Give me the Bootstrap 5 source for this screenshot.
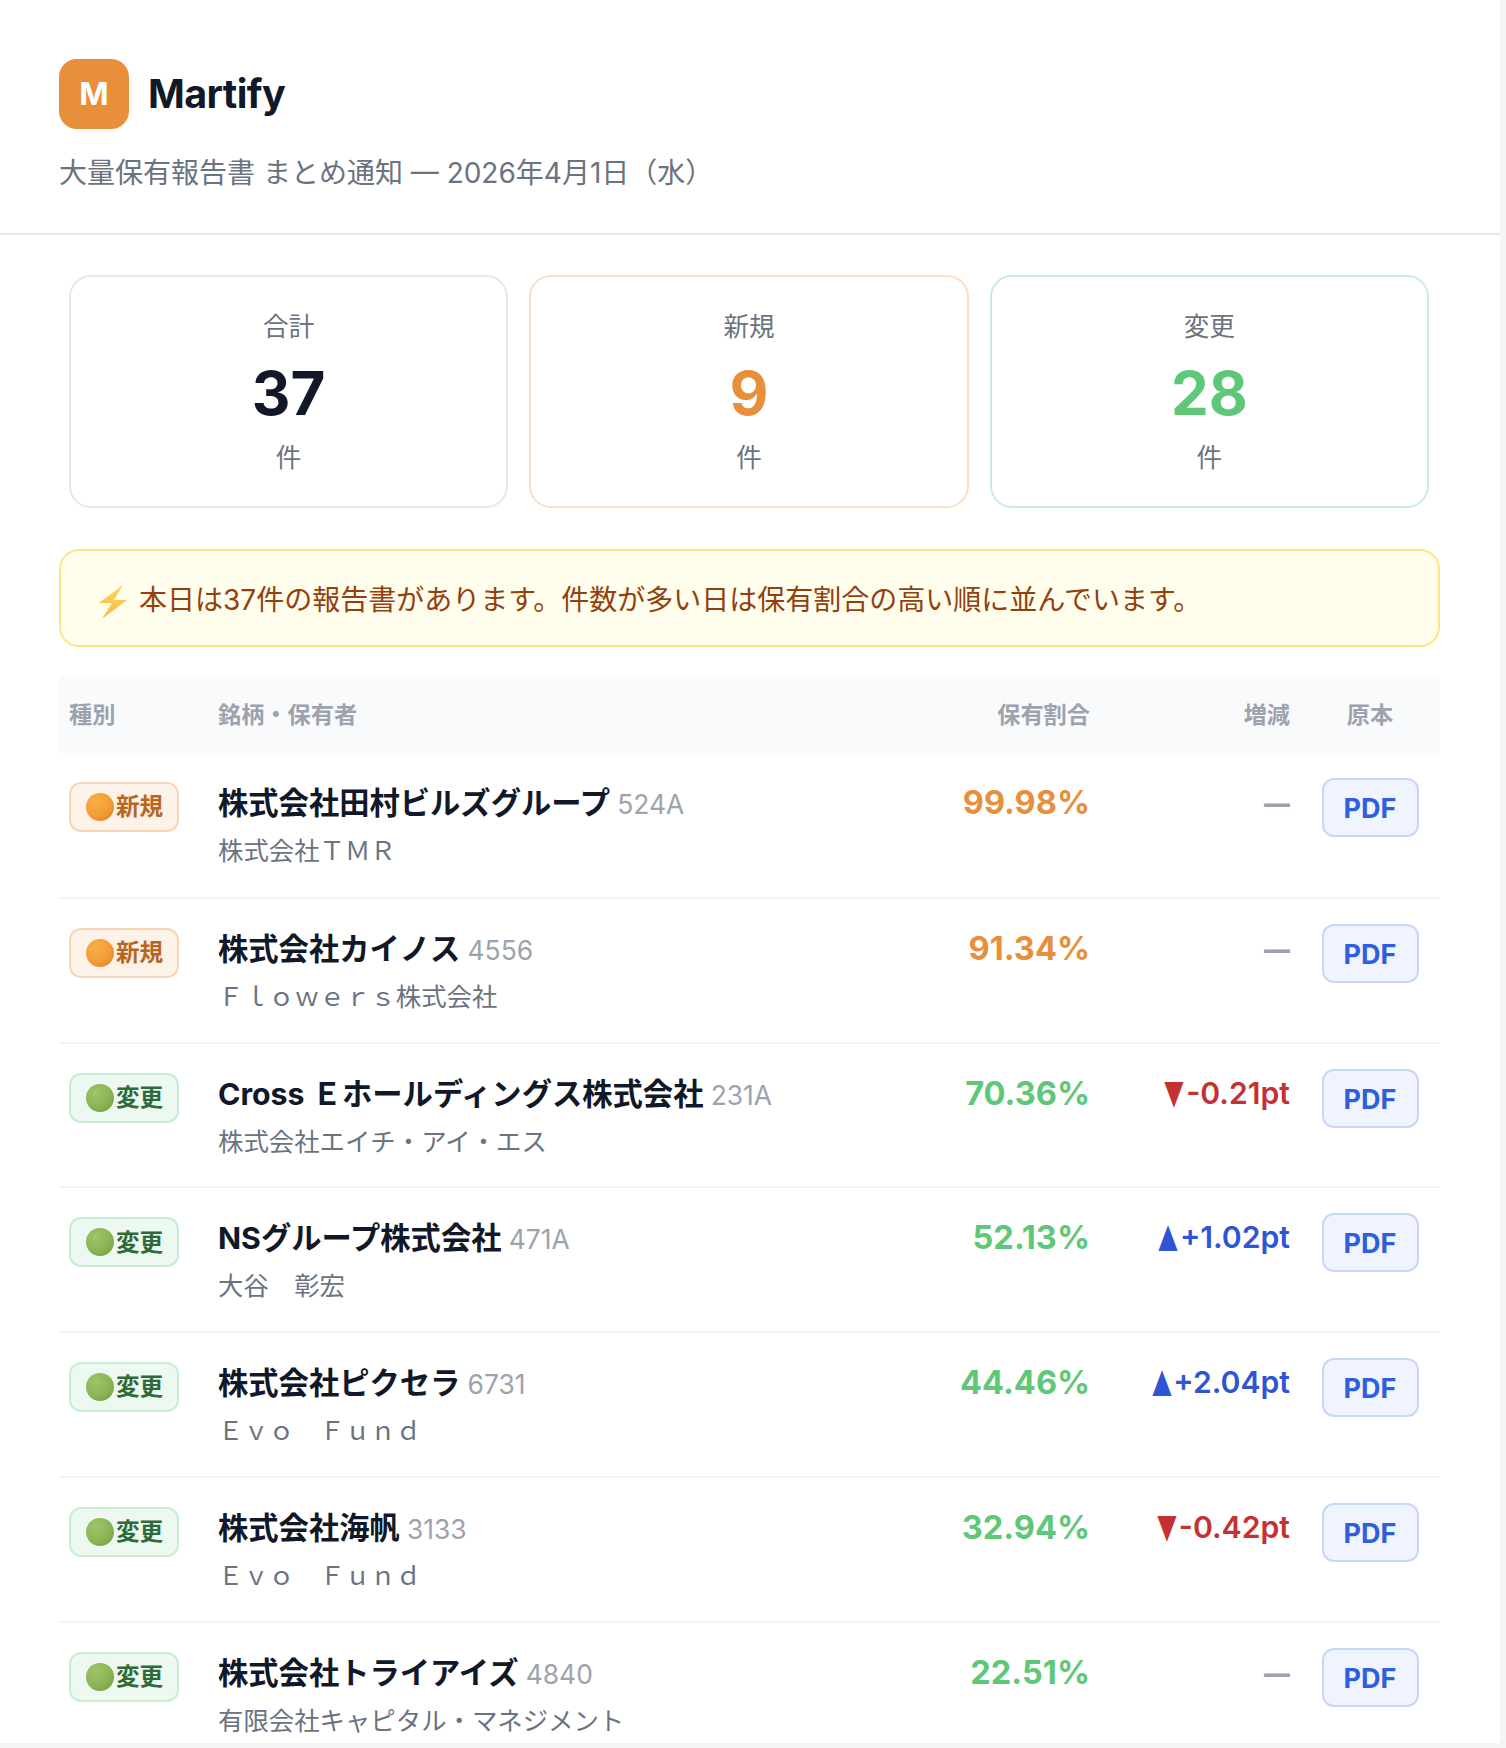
<!DOCTYPE html>
<html lang="ja">
<head>
<meta charset="utf-8">
<title>Martify</title>
<link href="https://cdn.jsdelivr.net/npm/bootstrap@5.3.0/dist/css/bootstrap.min.css" rel="stylesheet">
<style>
html,body{height:100%;overflow:hidden}
body{background:#f5f5f5;font-family:Inter,"Noto Sans CJK JP",sans-serif;color:#111827}
.sheet{width:1500px;height:1743px;background:#fff;overflow:hidden}
.mail-head{padding:59px 59px 0;height:235px;border-bottom:2px solid #e5e7eb}
.logo-box{width:70px;height:70px;border-radius:18px;background:#e88f3c;color:#fff;font-size:31.5px;font-weight:700;margin-right:19px}
.brand-name{font-size:39.5px;font-weight:700;line-height:70px;color:#111827;letter-spacing:-.6px}
.subtitle{font-size:28px;line-height:40px;color:#6b7280;margin-top:24px}
.mail-body{padding:40px 60px 0 59px}
.stat-row{gap:21px;padding:0 11px 0 10px;margin-bottom:41px}
.stat-box{flex:1 1 0;height:233px;border:2px solid #e5e7eb;border-radius:22px;text-align:center;padding-top:32px}
.stat-box.is-new{border-color:#fbdec5}
.stat-box.is-change{border-color:#c9eed4}
.stat-label{font-size:25.6px;line-height:36px;color:#6b7280}
.stat-num{font-size:60px;font-weight:700;line-height:80px;margin:8px 0 7px}
.c-orange{color:#e88f3c}
.c-green{color:#5fc878}
.notice{height:98px;border:2px solid #fde68a;background:#fffdeb;border-radius:20px;color:#92400e;font-size:28px;padding:4px 0 0 38px;margin-bottom:30px}
.notice svg{width:28px;height:34px;margin:4px 12px 0 0;flex:none}
.report-table{table-layout:fixed;width:1381px;margin:0;--bs-table-bg:transparent;color:#111827}
.report-table th{background:#f9fafb;height:76px;padding:0 10px;font-size:23.2px;font-weight:600;color:#9ca3af;vertical-align:middle;border:0}
.report-table td{height:144.8px;padding:25px 10px 0;vertical-align:top;border:0;border-bottom:2px solid #f3f4f6}
.report-table td.rate,.report-table td.delta{padding-top:27px}
.w-kind{width:149px}
.w-rate{width:150px}
.w-delta{width:200px}
.w-pdf{width:140px}
.kind-tag{width:110px;height:50px;border:2px solid;border-radius:12px;font-size:23.6px;font-weight:700;margin-top:4px;padding-left:15px}
.kind-tag svg{width:28px;height:28px;flex:none;margin-right:2px}
.kind-new{background:#fdf2e8;border-color:#f9d6b8;color:#b8651f}
.kind-change{background:#edf8f0;border-color:#c6eed2;color:#2f6b3a}
.co-name{font-size:30.3px;font-weight:700;line-height:44px;color:#111827;margin-top:3px}
.co-code{font-size:26.4px;font-weight:400;color:#9ca3af}
.holder{font-size:25.4px;line-height:40px;color:#6b7280;margin-top:5px}
.rate{font-size:32.6px;font-weight:700;line-height:44px}
.delta{font-size:30.2px;font-weight:600;line-height:44px}
.tri{display:inline-block;font-size:23px;transform:scale(.9,1.45);transform-origin:50% 55%}
.dash-val{color:#9ca3af;font-size:26px;font-weight:800}
.d-down{color:#c53030}
.d-up{color:#2f55d4}
.pdf-link{display:block;width:97px;height:59px;line-height:57px;margin:0 auto;border:2px solid #c7d7f8;background:#eff4ff;border-radius:12px;color:#2f5fdc;font-size:27px;font-weight:700;text-decoration:none;text-align:center}
</style>
</head>
<body>
<div class="sheet">
  <header class="mail-head">
    <div class="d-flex align-items-center">
      <div class="logo-box d-flex align-items-center justify-content-center">M</div>
      <div class="brand-name">Martify</div>
    </div>
    <div class="subtitle">大量保有報告書 まとめ通知 — 2026年4月1日（水）</div>
  </header>
  <main class="mail-body">
    <div class="d-flex stat-row">
      <div class="stat-box"><div class="stat-label">合計</div><div class="stat-num">37</div><div class="stat-label">件</div></div>
      <div class="stat-box is-new"><div class="stat-label">新規</div><div class="stat-num c-orange">9</div><div class="stat-label">件</div></div>
      <div class="stat-box is-change"><div class="stat-label">変更</div><div class="stat-num c-green">28</div><div class="stat-label">件</div></div>
    </div>
    <div class="notice d-flex align-items-center">
      <svg viewBox="0 0 28 34" aria-hidden="true"><defs><linearGradient id="bolt" x1="0" y1="0" x2="0" y2="1"><stop offset="0" stop-color="#fbd55e"/><stop offset="1" stop-color="#f7bb42"/></linearGradient></defs><path d="M24 0 0 18h13L3 34 28 15H15Z" fill="url(#bolt)"/></svg>
      <span>本日は37件の報告書があります。件数が多い日は保有割合の高い順に並んでいます。</span>
    </div>
    <svg width="0" height="0" class="position-absolute" aria-hidden="true">
      <defs>
        <radialGradient id="go" cx=".35" cy=".3" r=".8"><stop offset="0" stop-color="#f9b04a"/><stop offset=".7" stop-color="#f29a33"/><stop offset="1" stop-color="#e0832a"/></radialGradient>
        <radialGradient id="gg" cx=".35" cy=".3" r=".8"><stop offset="0" stop-color="#9fc46a"/><stop offset=".7" stop-color="#8ab253"/><stop offset="1" stop-color="#74a044"/></radialGradient>
        <symbol id="dot-o" viewBox="0 0 28 28"><circle cx="14" cy="14" r="14" fill="url(#go)"/></symbol>
        <symbol id="dot-g" viewBox="0 0 28 28"><circle cx="14" cy="14" r="14" fill="url(#gg)"/></symbol>
      </defs>
    </svg>
    <table class="table report-table">
      <thead><tr>
        <th class="w-kind">種別</th>
        <th>銘柄・保有者</th>
        <th class="w-rate text-end">保有割合</th>
        <th class="w-delta text-end">増減</th>
        <th class="w-pdf text-center">原本</th>
      </tr></thead>
      <tbody>
        <tr>
          <td><div class="kind-tag kind-new d-flex align-items-center"><svg><use href="#dot-o"/></svg>新規</div></td>
          <td><div class="co-name">株式会社田村ビルズグループ <span class="co-code">524A</span></div><div class="holder">株式会社ＴＭＲ</div></td>
          <td class="text-end rate c-orange">99.98%</td>
          <td class="text-end delta"><span class="dash-val">—</span></td>
          <td><a class="pdf-link" href="#">PDF</a></td>
        </tr>
        <tr>
          <td><div class="kind-tag kind-new d-flex align-items-center"><svg><use href="#dot-o"/></svg>新規</div></td>
          <td><div class="co-name">株式会社カイノス <span class="co-code">4556</span></div><div class="holder">Ｆｌｏｗｅｒｓ株式会社</div></td>
          <td class="text-end rate c-orange">91.34%</td>
          <td class="text-end delta"><span class="dash-val">—</span></td>
          <td><a class="pdf-link" href="#">PDF</a></td>
        </tr>
        <tr>
          <td><div class="kind-tag kind-change d-flex align-items-center"><svg><use href="#dot-g"/></svg>変更</div></td>
          <td><div class="co-name">Cross Ｅホールディングス株式会社 <span class="co-code">231A</span></div><div class="holder">株式会社エイチ・アイ・エス</div></td>
          <td class="text-end rate c-green">70.36%</td>
          <td class="text-end delta d-down"><span class="tri">▼</span>-0.21pt</td>
          <td><a class="pdf-link" href="#">PDF</a></td>
        </tr>
        <tr>
          <td><div class="kind-tag kind-change d-flex align-items-center"><svg><use href="#dot-g"/></svg>変更</div></td>
          <td><div class="co-name">NSグループ株式会社 <span class="co-code">471A</span></div><div class="holder">大谷　彰宏</div></td>
          <td class="text-end rate c-green">52.13%</td>
          <td class="text-end delta d-up"><span class="tri">▲</span>+1.02pt</td>
          <td><a class="pdf-link" href="#">PDF</a></td>
        </tr>
        <tr>
          <td><div class="kind-tag kind-change d-flex align-items-center"><svg><use href="#dot-g"/></svg>変更</div></td>
          <td><div class="co-name">株式会社ピクセラ <span class="co-code">6731</span></div><div class="holder">Ｅｖｏ　Ｆｕｎｄ</div></td>
          <td class="text-end rate c-green">44.46%</td>
          <td class="text-end delta d-up"><span class="tri">▲</span>+2.04pt</td>
          <td><a class="pdf-link" href="#">PDF</a></td>
        </tr>
        <tr>
          <td><div class="kind-tag kind-change d-flex align-items-center"><svg><use href="#dot-g"/></svg>変更</div></td>
          <td><div class="co-name">株式会社海帆 <span class="co-code">3133</span></div><div class="holder">Ｅｖｏ　Ｆｕｎｄ</div></td>
          <td class="text-end rate c-green">32.94%</td>
          <td class="text-end delta d-down"><span class="tri">▼</span>-0.42pt</td>
          <td><a class="pdf-link" href="#">PDF</a></td>
        </tr>
        <tr>
          <td><div class="kind-tag kind-change d-flex align-items-center"><svg><use href="#dot-g"/></svg>変更</div></td>
          <td><div class="co-name">株式会社トライアイズ <span class="co-code">4840</span></div><div class="holder">有限会社キャピタル・マネジメント</div></td>
          <td class="text-end rate c-green">22.51%</td>
          <td class="text-end delta"><span class="dash-val">—</span></td>
          <td><a class="pdf-link" href="#">PDF</a></td>
        </tr>
      </tbody>
    </table>
  </main>
</div>
<script src="https://cdn.jsdelivr.net/npm/bootstrap@5.3.0/dist/js/bootstrap.bundle.min.js"></script>
</body>
</html>
